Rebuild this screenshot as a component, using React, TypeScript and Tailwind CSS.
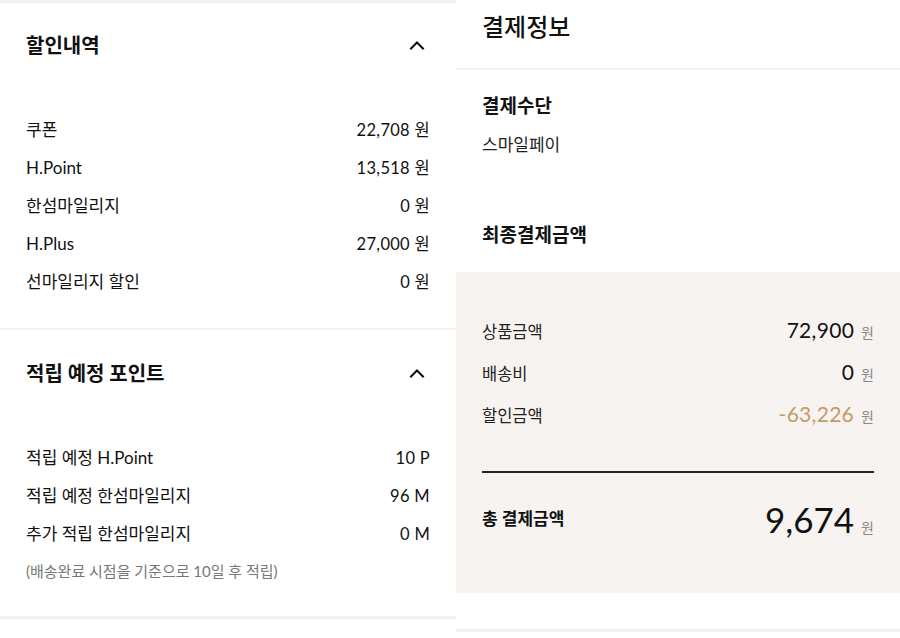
import React from "react";

const FONT = { fontFamily: '"Lato", "Noto Sans CJK KR", sans-serif' };

function Chevron() {
  return (
    <svg width="16" height="10" viewBox="0 0 16 10" fill="none" className="mr-[5px]">
      <path d="M2 8.5 L8 2.5 L14 8.5" stroke="#111" strokeWidth="2" strokeLinecap="square" strokeLinejoin="miter" />
    </svg>
  );
}

function LeftRow({ label, value }: { label: string; value: string }) {
  return (
    <div className="flex h-[38px] items-center justify-between text-[#111]">
      <span className="text-[17px]">{label}</span>
      <span className="text-[16.5px] tracking-[0.3px]">{value}</span>
    </div>
  );
}

function SumRow({ label, value, color }: { label: string; value: string; color?: string }) {
  return (
    <div className="flex h-[42px] items-baseline justify-between pt-[10px]">
      <span className="text-[16.5px] text-[#222]">{label}</span>
      <span className="flex items-baseline">
        <span className={`text-[21px] tracking-[0.3px] ${color ?? "text-[#111]"}`}>{value}</span>
        <span className="ml-[7px] text-[14px] text-[#888]">원</span>
      </span>
    </div>
  );
}

export default function App() {
  return (
    <div className="flex h-[638px] w-[900px] bg-white" style={FONT}>
      {/* Left */}
      <div className="w-[456px] shrink-0">
        <div className="border-t-[3px] border-b-2 border-[#f1f1f1] px-[26px] pb-[27px]">
          <div className="flex h-[84px] items-center justify-between">
            <span className="text-[20px] font-bold text-[#111]">할인내역</span>
            <Chevron />
          </div>
          <div className="pt-[24px]">
            <LeftRow label="쿠폰" value="22,708 원" />
            <LeftRow label="H.Point" value="13,518 원" />
            <LeftRow label="한섬마일리지" value="0 원" />
            <LeftRow label="H.Plus" value="27,000 원" />
            <LeftRow label="선마일리지 할인" value="0 원" />
          </div>
        </div>
        <div className="border-b-[3px] border-[#f1f1f1] px-[26px] pb-[35px]">
          <div className="flex h-[86px] items-center justify-between">
            <span className="text-[20px] font-bold text-[#111]">적립 예정 포인트</span>
            <Chevron />
          </div>
          <div className="pt-[23px]">
            <LeftRow label="적립 예정 H.Point" value="10 P" />
            <LeftRow label="적립 예정 한섬마일리지" value="96 M" />
            <LeftRow label="추가 적립 한섬마일리지" value="0 M" />
          </div>
          <div className="mt-[8px] text-[15px] leading-[20px] text-[#777]">
            (배송완료 시점을 기준으로 10일 후 적립)
          </div>
        </div>
      </div>

      {/* Right */}
      <div className="w-[444px] shrink-0">
        <div className="border-b-2 border-[#f1f1f1] px-[26px] pt-[13px] pb-[27px]">
          <div className="text-[24px] leading-[28px] font-medium text-[#111]">결제정보</div>
        </div>
        <div className="px-[26px] pt-[24px]">
          <div className="text-[19px] leading-[24px] font-bold text-[#111]">결제수단</div>
          <div className="mt-[16px] text-[17px] leading-[22px] text-[#222]">스마일페이</div>
          <div className="mt-[67px] text-[19px] leading-[24px] font-bold text-[#111]">최종결제금액</div>
        </div>
        <div className="mt-[25px] bg-[#f7f3f1] px-[26px] pt-[32px] pb-[49px]">
          <SumRow label="상품금액" value="72,900" />
          <SumRow label="배송비" value="0" />
          <SumRow label="할인금액" value="-63,226" color="text-[#c49a6c]" />
          <div className="mt-[41px] h-[1.5px] bg-[#222]" />
          <div className="mt-[21px] flex h-[50px] items-center justify-between">
            <span className="text-[17px] font-bold text-[#111]">총 결제금액</span>
            <span className="flex items-baseline">
              <span className="text-[35px] leading-[40px] text-[#111]">9,674</span>
              <span className="ml-[7px] text-[14px] text-[#888]">원</span>
            </span>
          </div>
        </div>
        <div className="mt-[36px] border-t-[3px] border-[#f1f1f1]" />
      </div>
    </div>
  );
}
